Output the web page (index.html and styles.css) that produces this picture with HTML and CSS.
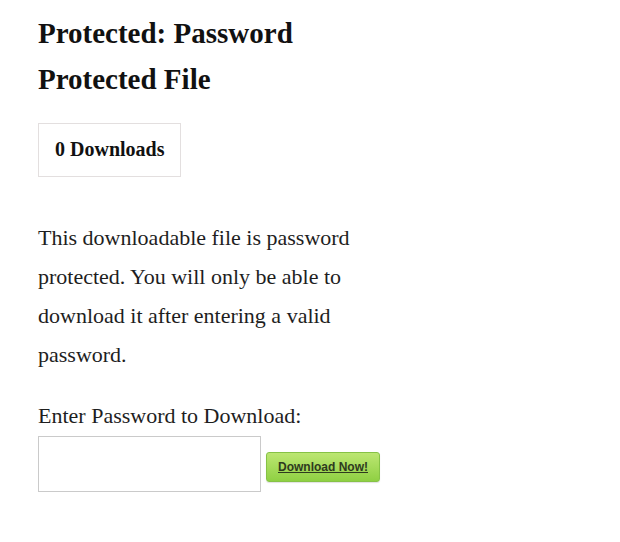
FILE: index.html
```html
<!DOCTYPE html>
<html lang="en">
<head>
<meta charset="utf-8">
<title>Protected: Password Protected File</title>
<link rel="stylesheet" href="styles.css">
</head>
<body>
<main class="page">
  <h1 class="title">Protected: Password Protected File</h1>
  <div class="count">0 Downloads</div>
  <p class="desc">This downloadable file is password protected. You will only be able to download it after entering a valid password.</p>
  <form class="pw-form" onsubmit="return false">
    <label class="pw-label" for="pw">Enter Password to Download:</label>
    <div class="pw-row">
      <input class="pw-input" id="pw" type="password">
      <button class="pw-btn" type="submit">Download Now!</button>
    </div>
  </form>
</main>
</body>
</html>
```

FILE: styles.css
```css
html, body {
  margin: 0;
  padding: 0;
  background: #fff;
}
body {
  font-family: "Liberation Serif", "Times New Roman", serif;
  color: #1e1e1e;
}
.page {
  width: 355px;
  padding: 10px 0 0 38px;
}
.title {
  margin: 0;
  font-size: 29px;
  line-height: 46px;
  font-weight: bold;
  color: #111;
}
.count {
  display: inline-block;
  margin-top: 21px;
  border: 1px solid #e3dfdf;
  padding: 0 16px 2px;
  line-height: 50px;
  font-size: 20px;
  font-weight: bold;
  color: #111;
}
.desc {
  margin: 41px 0 22px;
  font-size: 22px;
  line-height: 39px;
}
.pw-form {
  margin: 0;
}
.pw-label {
  display: block;
  font-size: 22px;
  line-height: 39px;
}
.pw-row {
  display: flex;
  align-items: flex-end;
  gap: 5px;
  margin-top: 1px;
}
.pw-input {
  box-sizing: border-box;
  width: 223px;
  height: 56px;
  margin: 0;
  border: 1px solid #cacaca;
  background: #fff;
  padding: 4px 8px;
  font-size: 16px;
}
.pw-btn {
  box-sizing: border-box;
  height: 30px;
  width: 114px;
  margin: 0 0 10px;
  padding: 0 10px;
  border: 1px solid #86c246;
  border-radius: 3px;
  background: linear-gradient(#bce672, #8fd043);
  box-shadow: 0 1px 1px rgba(0,0,0,0.12);
  font-family: "Liberation Sans", Arial, sans-serif;
  font-size: 12px;
  font-weight: bold;
  color: #2e3a1e;
  text-decoration: underline;
  cursor: pointer;
}
```
